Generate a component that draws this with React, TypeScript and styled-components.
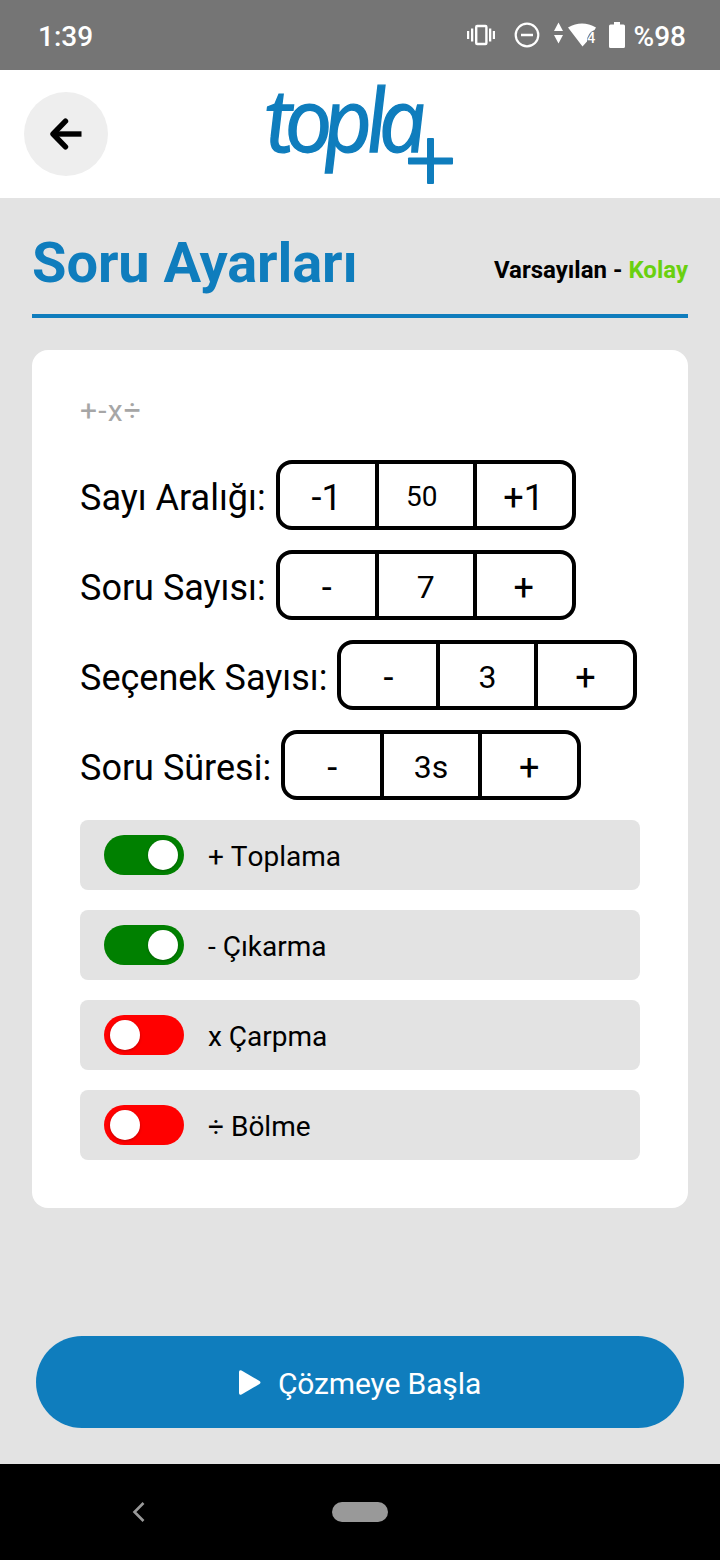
import React, { useState } from "react";
import styled, { createGlobalStyle } from "styled-components";

const BLUE = "#0f7dbd";

const GlobalStyle = createGlobalStyle`
  * { box-sizing: border-box; }
  body { margin: 0; background: #e3e3e3; font-family: Roboto, "Noto Sans", sans-serif; color: #000; }
  button { font: inherit; color: inherit; border: 0; background: none; padding: 0; }
`;

const Screen = styled.div`
  width: 720px;
  height: 1560px;
  display: flex;
  flex-direction: column;
  background: #e3e3e3;
`;

const StatusBar = styled.div`
  height: 70px;
  flex: none;
  display: flex;
  align-items: center;
  justify-content: space-between;
  padding: 3px 34px 0 38px;
  background: #757575;
  color: #fff;
  font-size: 28px;
  font-weight: 500;
`;

const StatusIcons = styled.div`
  display: flex;
  align-items: center;
  gap: 6px;
  svg { display: block; margin-top: -3px; }
`;

const Header = styled.header`
  height: 128px;
  flex: none;
  display: grid;
  grid-template-columns: 84px 1fr 84px;
  align-items: center;
  padding: 0 24px;
  background: #fff;
`;

const BackButton = styled.button`
  width: 84px;
  height: 84px;
  border-radius: 50%;
  background: #eee;
  display: grid;
  place-items: center;
`;

const Logo = styled.svg`
  justify-self: center;
  overflow: visible;
  font-family: "Open Sans", "Noto Sans", sans-serif;
  font-style: italic;
`;

const Content = styled.main`
  flex: 1;
  display: flex;
  flex-direction: column;
  padding: 32px 32px 36px;
`;

const TitleRow = styled.div`
  height: 88px;
  flex: none;
  display: flex;
  justify-content: space-between;
  border-bottom: 4px solid ${BLUE};
`;

const Title = styled.h1`
  margin: 0;
  font-size: 56px;
  line-height: 66px;
  font-weight: 700;
  letter-spacing: -0.1px;
  color: ${BLUE};
`;

const Preset = styled.div`
  font-size: 24px;
  line-height: 28px;
  font-weight: 700;
  padding-top: 26px;
  span { color: #6ad010; }
`;

const Card = styled.section`
  margin-top: 32px;
  height: 858px;
  flex: none;
  padding: 44px 48px 48px;
  border-radius: 16px;
  background: #fff;
`;

const Signs = styled.div`
  height: 66px;
  font-size: 30px;
  line-height: 33px;
  letter-spacing: 1.2px;
  color: #a6a6a6;
`;

const Rows = styled.div`
  display: flex;
  flex-direction: column;
  gap: 20px;
`;

const Setting = styled.div`
  height: 70px;
  display: flex;
  align-items: center;
  gap: 10px;
  font-size: 36px;
  white-space: nowrap;
`;

const SettingLabel = styled.span`
  padding-top: 5px;
`;

const Stepper = styled.div`
  width: 300px;
  height: 70px;
  display: grid;
  grid-template-columns: 95px 102px 95px;
  border: 4px solid #000;
  border-radius: 16px;
`;

const StepButton = styled.button`
  padding: 5px 1px 0 0;
`;

const StepValue = styled.div<{ $small?: boolean }>`
  display: flex;
  align-items: center;
  justify-content: center;
  border: solid #000;
  border-width: 0 4px;
  font-size: ${(p) => (p.$small ? 28 : 32)}px;
  padding: ${(p) => (p.$small ? "2px 8px 0 0" : "3px 0 0 0")};
`;

const ToggleRow = styled.div`
  height: 70px;
  display: flex;
  align-items: center;
  gap: 24px;
  padding: 0 24px;
  border-radius: 8px;
  background: #e3e3e3;
  font-size: 28px;
`;

const ToggleLabel = styled.span`
  padding-top: 3px;
  font-kerning: none;
`;

const Track = styled.button<{ $on: boolean }>`
  width: 80px;
  height: 40px;
  padding: 0 6px;
  border-radius: 20px;
  display: flex;
  align-items: center;
  justify-content: ${(p) => (p.$on ? "flex-end" : "flex-start")};
  background: ${(p) => (p.$on ? "#008000" : "#ff0000")};
`;

const Knob = styled.span`
  width: 30px;
  height: 30px;
  border-radius: 50%;
  background: #fff;
  box-shadow: 0 1px 3px rgba(0, 0, 0, 0.25);
`;

const StartButton = styled.button`
  margin: auto 4px 0;
  height: 92px;
  border-radius: 46px;
  display: flex;
  align-items: center;
  justify-content: center;
  gap: 17px;
  background: ${BLUE};
  color: #fff;
  font-size: 30px;
  letter-spacing: -0.12px;
  span { padding-top: 3px; }
`;

const NavBar = styled.nav`
  height: 96px;
  flex: none;
  display: grid;
  grid-template-columns: 1fr 56px 1fr;
  align-items: center;
  background: #000;
`;

const NavBack = styled.svg`
  margin-left: 130px;
`;

const HomePill = styled.div`
  height: 20px;
  border-radius: 10px;
  background: #999;
`;

const settings = [
  { label: "Sayı Aralığı:", minus: "-1", value: "50", plus: "+1", small: true },
  { label: "Soru Sayısı:", minus: "-", value: "7", plus: "+" },
  { label: "Seçenek Sayısı:", minus: "-", value: "3", plus: "+" },
  { label: "Soru Süresi:", minus: "-", value: "3s", plus: "+" },
];

const operations = ["+ Toplama", "- Çıkarma", "x Çarpma", "÷ Bölme"];

export default function App() {
  const [enabled, setEnabled] = useState([true, true, false, false]);
  const toggle = (i: number) => setEnabled(enabled.map((v, n) => (n === i ? !v : v)));

  return (
    <>
      <GlobalStyle />
      <Screen>
        <StatusBar>
          <span>1:39</span>
          <StatusIcons>
            <svg width="166" height="34" viewBox="462 18 166 34" fill="#fff">
              <rect x="476.2" y="26" width="10.2" height="18" rx="1" fill="none" stroke="#fff" strokeWidth="2.4" />
              <path d="M471 28.5h2.3v13H471zM467 31h2.2v8H467zM489 28.5h2.3v13H489zM492.8 31h2.2v8h-2.2z" />
              <circle cx="527" cy="35" r="11.3" fill="none" stroke="#fff" strokeWidth="2.2" />
              <path d="M521 33.7h12v2.6h-12zM558.5 22.5l4.5 8.5h-9zM558.5 43.5l4.5-8.5h-9z" />
              <path d="M568 27.5Q582 19.5 596 27.5L594.5 30Q587 33 587 41.5L582.5 46.5z" />
              <text x="587.3" y="43" fontSize="14" fontWeight="500" fontFamily="Roboto, sans-serif">4</text>
              <path d="M614 22h6v2.5h3.5q1.5 0 1.5 1.5v20.5q0 1.5-1.5 1.5h-13q-1.5 0-1.5-1.5V26q0-1.5 1.5-1.5h3.5z" />
            </svg>
            <span>%98</span>
          </StatusIcons>
        </StatusBar>

        <Header>
          <BackButton aria-label="Geri">
            <svg width="34" height="32" viewBox="0 0 34 32" fill="none" stroke="#000" strokeWidth="5.4">
              <path d="M16.5 3.2L4 16l12.5 12.8" strokeLinecap="round" strokeLinejoin="round" />
              <path d="M5 16h27.5" />
            </svg>
          </BackButton>
          <Logo width="220" height="128" viewBox="250 70 220 128" fill={BLUE}>
            <text
              transform="translate(267 151.5) skewX(5) scale(0.97 1)"
              x="0 20 60 104 117"
              fontSize="88"
              stroke={BLUE}
              strokeWidth="1.4"
            >
              topla
            </text>
            <rect x="408" y="157.5" width="45" height="7" rx="1" />
            <rect x="427" y="138" width="7" height="46" rx="1" />
          </Logo>
        </Header>

        <Content>
          <TitleRow>
            <Title>Soru Ayarları</Title>
            <Preset>
              Varsayılan - <span>Kolay</span>
            </Preset>
          </TitleRow>

          <Card>
            <Signs>+-x÷</Signs>
            <Rows>
              {settings.map((s) => (
                <Setting key={s.label}>
                  <SettingLabel>{s.label}</SettingLabel>
                  <Stepper>
                    <StepButton>{s.minus}</StepButton>
                    <StepValue $small={s.small}>{s.value}</StepValue>
                    <StepButton>{s.plus}</StepButton>
                  </Stepper>
                </Setting>
              ))}
              {operations.map((name, i) => (
                <ToggleRow key={name}>
                  <Track $on={enabled[i]} onClick={() => toggle(i)} aria-label={name}>
                    <Knob />
                  </Track>
                  <ToggleLabel>{name}</ToggleLabel>
                </ToggleRow>
              ))}
            </Rows>
          </Card>

          <StartButton>
            <svg width="22" height="25" viewBox="0 0 22 25" fill="#fff">
              <path d="M0 2Q0-.5 2.5.5L20.5 11q2 1.5 0 3L2.5 24.5Q0 25.5 0 23z" />
            </svg>
            <span>Çözmeye Başla</span>
          </StartButton>
        </Content>

        <NavBar>
          <NavBack width="18" height="22" viewBox="0 0 18 22" fill="none" stroke="#999" strokeWidth="2.6">
            <path d="M13.5 2L4.5 11l9 9" />
          </NavBack>
          <HomePill />
        </NavBar>
      </Screen>
    </>
  );
}
